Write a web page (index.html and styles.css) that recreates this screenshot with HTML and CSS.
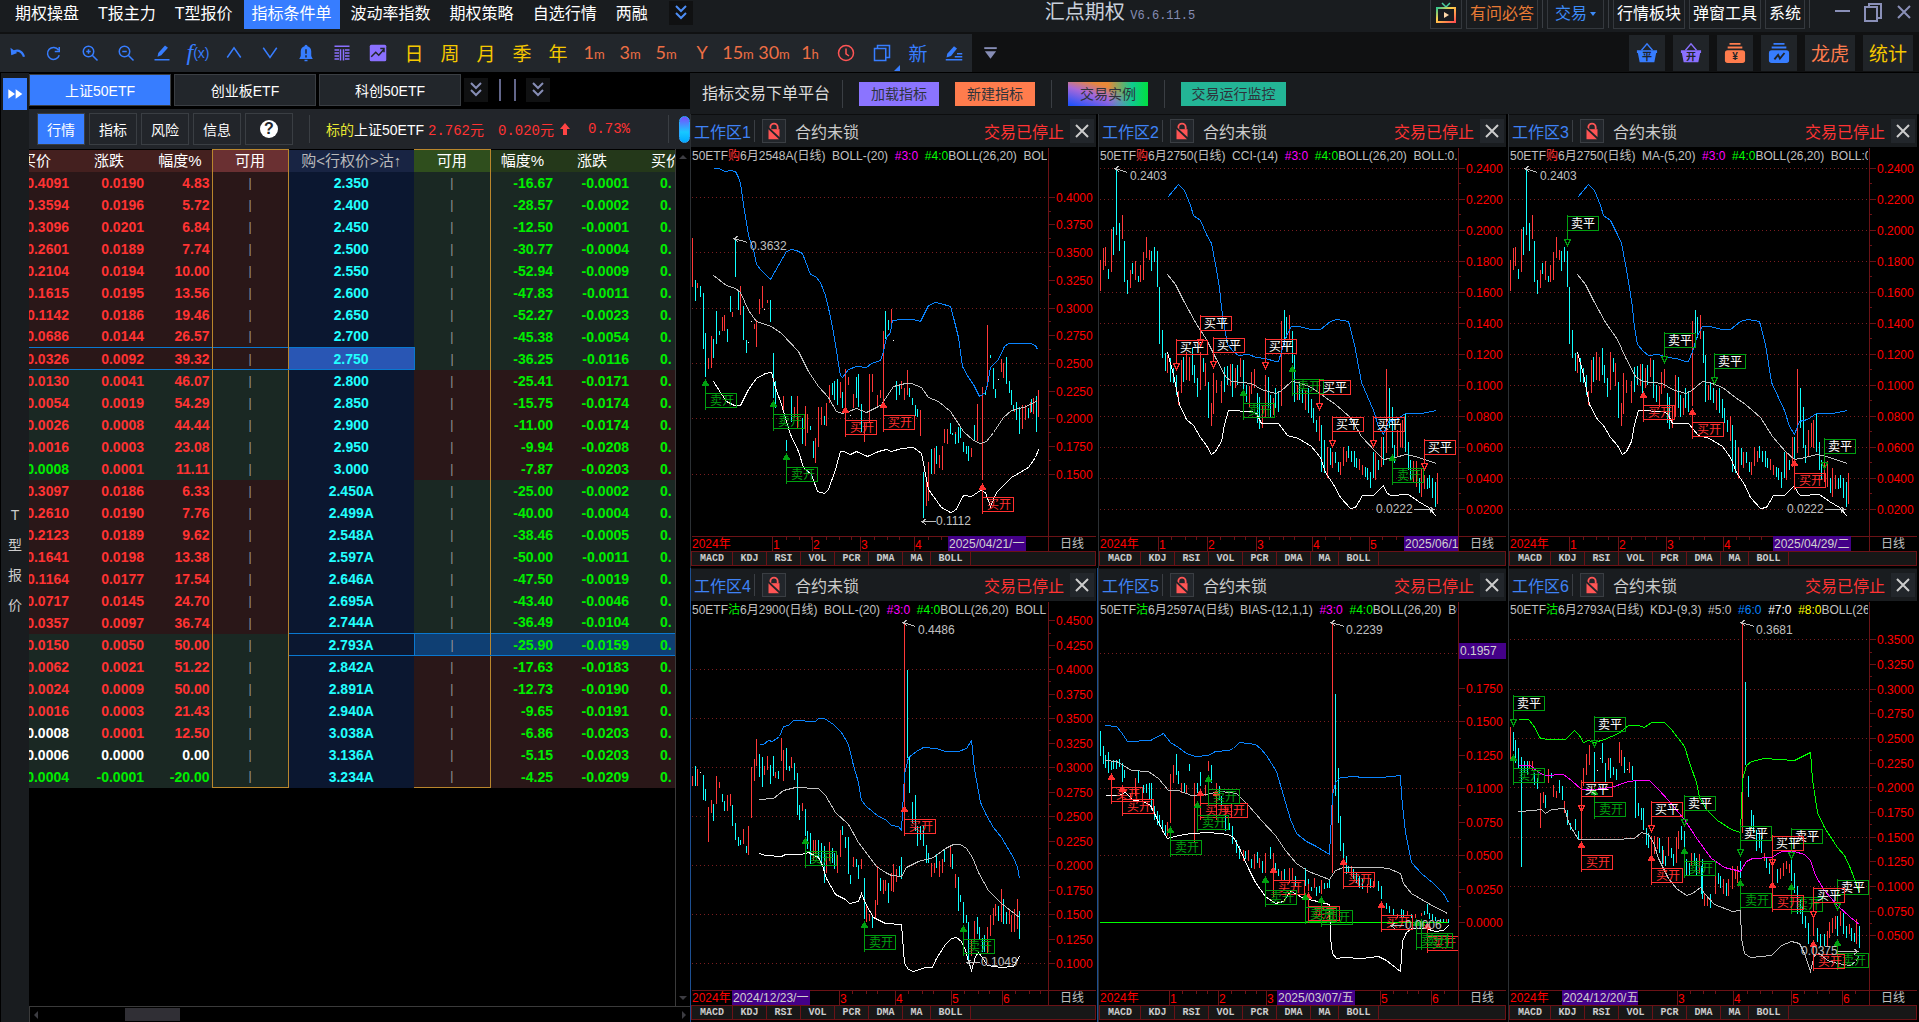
FILE: index.html
```html
<!DOCTYPE html>
<html lang="zh-CN">
<head>
    <meta charset="UTF-8">
    <meta name="viewport" content="width=device-width, initial-scale=1.0">
    <title>汇点期权</title>
    <link rel="stylesheet" href="styles.css">
</head>
<body>

    <!-- Shared icons -->
    <svg class="icon-defs" aria-hidden="true">
        <symbol id="i-chevrons" viewBox="0 0 24 24"><path d="M7 5l5 5 5-5M7 12l5 5 5-5" fill="none" stroke="currentColor" stroke-width="2"/></symbol>
        <symbol id="i-close" viewBox="0 0 24 24"><path d="M6 6l12 12M18 6L6 18" fill="none" stroke="currentColor" stroke-width="2"/></symbol>
        <symbol id="i-lock" viewBox="0 0 24 24"><path d="M8 10V8a4 4 0 0 1 8 0v2" fill="none" stroke="#f55" stroke-width="2"/><path d="M6 10h12v11H6z" fill="#f55"/><path d="M4 7l15 14" stroke="#202428" stroke-width="2"/></symbol>
        <symbol id="i-basket" viewBox="0 0 24 24"><path d="M6 9l6-7 6 7" fill="none" stroke="currentColor" stroke-width="1.5"/><path d="M1 9h22v3h-1l-2 10H4L2 12H1z" fill="currentColor"/></symbol>
        <symbol id="i-stack" viewBox="0 0 24 24"><path d="M6 2h12M4 6h16" stroke="currentColor" stroke-width="2"/><rect x="1" y="9" width="22" height="14" rx="3" fill="currentColor"/></symbol>
    </svg>

    <!-- Title bar -->
    <div class="titlebar">
        <nav class="menu">
            <a href="#">期权操盘</a>
            <a href="#">T报主力</a>
            <a href="#">T型报价</a>
            <a href="#" class="active">指标条件单</a>
            <a href="#">波动率指数</a>
            <a href="#">期权策略</a>
            <a href="#">自选行情</a>
            <a href="#">两融</a>
            <button class="more" aria-label="更多"><svg><use href="#i-chevrons"/></svg></button>
        </nav>
        <div class="app-name">汇点期权 <span>V6.6.11.5</span></div>
        <div class="title-actions">
            <button class="tv" aria-label="视频">
                <svg viewBox="0 0 24 24">
                    <defs><linearGradient id="tv" x1="0" y1="0" x2="1" y2="1"><stop offset="0" stop-color="#36c98f"/><stop offset=".4" stop-color="#ffd04a"/><stop offset="1" stop-color="#ff4f4f"/></linearGradient></defs>
                    <path d="M8 1l4 4 4-4" fill="none" stroke="#4bd0a0" stroke-width="1.5"/>
                    <rect x="3" y="6" width="18" height="14" fill="none" stroke="url(#tv)" stroke-width="2"/>
                    <path d="M10 10l5 3-5 3z" fill="#ffd8a8"/>
                </svg>
            </button>
            <button class="ask">有问必答</button>
            <i class="sep"></i>
            <button class="trade">交易<span class="caret"></span></button>
            <i class="sep"></i>
            <button>行情板块</button>
            <button>弹窗工具</button>
            <button>系统</button>
            <i class="sep"></i>
        </div>
        <div class="window-buttons">
            <button aria-label="最小化"><svg viewBox="0 0 24 24"><path d="M5 11h15" stroke="currentColor" stroke-width="2"/></svg></button>
            <button aria-label="还原"><svg viewBox="0 0 24 24"><path d="M4 7h12v14H4zM8 7V4h12v14h-4" fill="none" stroke="currentColor" stroke-width="2"/></svg></button>
            <button aria-label="关闭"><svg><use href="#i-close"/></svg></button>
        </div>
    </div>

    <!-- Toolbar -->
    <div class="toolbar">
        <div class="tools">
            <button aria-label="撤销"><svg viewBox="0 0 24 24"><path d="M5 11c5-4 12-3 15 6" fill="none" stroke="currentColor" stroke-width="3"/><path d="M2 5l1 10 8-3z" fill="currentColor"/></svg></button>
            <button aria-label="刷新"><svg viewBox="0 0 24 24"><path d="M18 8a8 8 0 1 0 1 7M19 4v6h-6" fill="none" stroke="currentColor" stroke-width="2"/></svg></button>
            <button aria-label="放大"><svg viewBox="0 0 24 24"><circle cx="10" cy="10" r="7" fill="none" stroke="currentColor" stroke-width="2"/><path d="M7 10h6M10 7v6M15 15l7 7" stroke="currentColor" stroke-width="2"/></svg></button>
            <button aria-label="缩小"><svg viewBox="0 0 24 24"><circle cx="10" cy="10" r="7" fill="none" stroke="currentColor" stroke-width="2"/><path d="M7 10h6M15 15l7 7" stroke="currentColor" stroke-width="2"/></svg></button>
            <button aria-label="画线"><svg viewBox="0 0 24 24"><path d="M2 21h20" stroke="currentColor" stroke-width="2"/><path d="M6 17l1-5 9-10 4 3-9 10z" fill="currentColor"/></svg></button>
            <button class="fx" aria-label="公式"><i>f</i>(x)</button>
            <button aria-label="上"><svg viewBox="0 0 24 24"><path d="M3 18l9-13 9 13" fill="none" stroke="currentColor" stroke-width="2"/></svg></button>
            <button aria-label="下"><svg viewBox="0 0 24 24"><path d="M3 5l9 13 9-13" fill="none" stroke="currentColor" stroke-width="2"/></svg></button>
            <button aria-label="预警"><svg viewBox="0 0 24 24"><path d="M12 1a2 2 0 0 1 2 2c3 1 5 3 5 7v6l2 4H3l2-4v-6c0-4 2-6 5-7a2 2 0 0 1 2-2zM10 21h4v2h-4z" fill="currentColor"/><path d="M12 7v6M12 15v3" stroke="#22262b" stroke-width="2"/></svg></button>
            <button class="violet" aria-label="T型"><svg viewBox="0 0 24 24"><path d="M2 3h20M10 7v15M14 7v15M2 8h6M2 12h6M2 16h6M2 20h6M16 8h6M16 12h6M16 16h6M16 20h6" stroke="currentColor" stroke-width="2"/></svg></button>
            <button class="violet" aria-label="走势"><svg viewBox="0 0 24 24"><rect x="1" y="1" width="22" height="22" rx="2" fill="currentColor"/><path d="M3 17l6-6 4 4 7-8M15 6h5v5" fill="none" stroke="#22262b" stroke-width="2"/></svg></button>
            <button class="period">日</button>
            <button class="period">周</button>
            <button class="period">月</button>
            <button class="period">季</button>
            <button class="period">年</button>
            <button class="minute">1<small>m</small></button>
            <button class="minute">3<small>m</small></button>
            <button class="minute">5<small>m</small></button>
            <button class="minute">Y</button>
            <button class="minute">15<small>m</small></button>
            <button class="minute">30<small>m</small></button>
            <button class="minute">1<small>h</small></button>
            <button class="clock" aria-label="定时"><svg viewBox="0 0 24 24"><circle cx="12" cy="12" r="10" fill="none" stroke="currentColor" stroke-width="2"/><path d="M12 6v7l4 3" fill="none" stroke="currentColor" stroke-width="2"/></svg></button>
            <button class="windows" aria-label="窗口"><svg viewBox="0 0 24 24"><path d="M2 6h15v16H2zM6 6V2h16v16h-5" fill="none" stroke="currentColor" stroke-width="2"/></svg></button>
            <button class="new">新</button>
            <button aria-label="编辑"><svg viewBox="0 0 24 24"><path d="M1 21h22M13 17h10M16 13h7" stroke="currentColor" stroke-width="2"/><path d="M2 18l1-5 9-10 4 3-8 10z" fill="currentColor"/></svg></button>
        </div>
        <button class="drop" aria-label="更多工具"><svg viewBox="0 0 24 24"><path d="M2 5h20" stroke="currentColor" stroke-width="3"/><path d="M3 10h18l-9 12z" fill="currentColor"/></svg></button>
        <div class="shortcuts">
            <button class="blue"><svg><use href="#i-basket"/></svg><b>平</b></button>
            <button class="violet"><svg><use href="#i-basket"/></svg><b>开</b></button>
            <button class="orange"><svg><use href="#i-stack"/></svg><b>¥</b></button>
            <button class="blue" aria-label="走势图"><svg viewBox="0 0 24 24"><use href="#i-stack"/><path d="M7 19l4-5 2 4 5-6" fill="none" stroke="#202428" stroke-width="2"/></svg></button>
            <button class="wide orange">龙虎</button>
            <button class="wide yellow">统计</button>
        </div>
    </div>

    <div class="main">
        <!-- Side rail -->
        <div class="rail">
            <button class="expand" aria-label="展开"><svg viewBox="0 0 24 24"><path d="M2 5l10 7-10 7zM13 5l10 7-10 7z" fill="#fff"/></svg></button>
            <a href="#" class="rail-label">T型报价</a>
        </div>

        <!-- Option quotes -->
        <div class="quotes">
            <div class="tabs">
                <button class="active">上证50ETF</button>
                <button>创业板ETF</button>
                <button>科创50ETF</button>
                <button class="more" aria-label="更多标的"><svg><use href="#i-chevrons"/></svg></button>
                <i class="bar"></i>
                <i class="bar"></i>
                <button class="more" aria-label="更多月份"><svg><use href="#i-chevrons"/></svg></button>
            </div>
            <div class="subbar">
                <button class="active">行情</button>
                <button>指标</button>
                <button>风险</button>
                <button>信息</button>
                <button aria-label="帮助"><span class="help">?</span></button>
                <i class="sep"></i>
                <div class="underlying"><em>标的</em>上证50ETF</div>
                <div class="figure">2.762元</div>
                <div class="figure">0.020元</div>
                <svg class="up" viewBox="0 0 18 24"><path d="M9 6l5 6h-3v6H7v-6H4z" fill="#f44"/></svg>
                <div class="figure">0.73%</div>
                <i class="sep last"></i>
                <i class="pill"></i>
            </div>
            <div class="table-area">
                <div class="table-clip">
                    <table class="chain">
                        <colgroup><col class="c1"><col class="c2"><col class="c3"><col class="c4"><col class="c5"><col class="c6"><col class="c7"><col class="c8"><col class="c9"></colgroup>
                        <thead>
                            <tr>
                                <th class="bid">买价</th>
                                <th>涨跌</th>
                                <th class="pct">幅度%</th>
                                <th class="avail">可用</th>
                                <th class="strike">购&lt;行权价&gt;沽↑</th>
                                <th class="put avail">可用</th>
                                <th class="put pct">幅度%</th>
                                <th class="put">涨跌</th>
                                <th class="put ask">买价</th>
                            </tr>
                        </thead>
                        <tbody id="chain-body"></tbody>
                    </table>
                </div>
                <div class="vscroll"><i></i><i></i></div>
            </div>
            <div class="hscroll"><i></i><span></span><i></i></div>
        </div>

        <!-- Indicator trading workspaces -->
        <div class="platform">
            <div class="platform-head">
                <h1>指标交易下单平台</h1>
                <button class="load">加载指标</button>
                <button class="create">新建指标</button>
                <i class="sep"></i>
                <button class="demo">交易实例</button>
                <i class="sep"></i>
                <button class="monitor">交易运行监控</button>
            </div>
            <div class="workspaces" id="workspaces"></div>
        </div>
    </div>

    <script src="script.js"></script>
</body>
</html>
```

FILE: styles.css
```css
* {
    box-sizing: border-box;
}
body {
    margin: 0;
    height: 100vh;
    min-width: 1500px;
    display: flex;
    flex-direction: column;
    overflow: hidden;
    background: #000;
    color: #fff;
    font: 16px "Liberation Sans", "Noto Sans CJK SC", sans-serif;
}
button {
    margin: 0;
    padding: 0;
    border: 0;
    background: none;
    color: inherit;
    font: inherit;
    white-space: nowrap;
    cursor: pointer;
}
a {
    color: inherit;
    text-decoration: none;
}
svg {
    width: 24px;
    height: 24px;
    display: block;
}
.icon-defs {
    position: absolute;
    width: 0;
    height: 0;
}
.sep {
    width: 1px;
    height: 28px;
    background: #3a3e43;
}

/* Title bar */
.titlebar {
    flex: none;
    height: 33px;
    display: flex;
    align-items: flex-start;
    background: #191c1f;
    border-bottom: 1px solid #101112;
}
.menu {
    flex: 3 0 auto;
    display: flex;
    gap: 3px;
    padding-left: 7px;
}
.menu a {
    padding: 0 8px;
    line-height: 28px;
    height: 29px;
    white-space: nowrap;
}
.menu a.active,
.tabs .active,
.subbar .active {
    background: #377dff;
}
.more {
    width: 24px;
    height: 24px;
    background: #101112;
    color: #4d8df5;
}
.menu .more {
    margin: 1px 0 0 10px;
}
.app-name {
    font-size: 20px;
    line-height: 24px;
    color: #c8cfda;
}
.app-name span {
    font: 12px "Liberation Mono", monospace;
    color: #868db5;
}
.title-actions {
    flex: 2 0 auto;
    display: flex;
    justify-content: flex-end;
    gap: 4px;
}
.title-actions button {
    height: 29px;
    padding: 0 3px;
    line-height: 26px;
    background: #191c1f;
    border: 1px solid #34383d;
    border-top: 0;
}
.title-actions .tv {
    width: 32px;
}
.title-actions .ask {
    color: #e87a35;
}
.title-actions .trade {
    color: #3d8bf7;
    padding: 0 7px;
}
.caret {
    display: inline-block;
    margin-left: 3px;
    border: 3px solid transparent;
    border-top: 4px solid #3d8bf7;
}
.window-buttons {
    display: flex;
    gap: 7px;
    padding: 0 3px 0 20px;
    color: #8a90b8;
}

/* Toolbar */
.toolbar {
    flex: none;
    height: 40px;
    display: flex;
    align-items: center;
    background: #101112;
    border-bottom: 1px solid #000;
}
.tools {
    display: flex;
    align-items: center;
    height: 38px;
    background: #22262b;
    color: #377dff;
}
.tools button {
    position: relative;
    width: 36px;
    height: 36px;
    display: flex;
    align-items: center;
    justify-content: center;
}
.tools svg {
    width: 18px;
    height: 18px;
}
.tools .fx {
    font-size: 14px;
}
.fx i {
    font: italic 24px "Liberation Serif", serif;
}
.tools .violet,
.shortcuts .violet {
    color: #8a70ff;
}
.tools .period {
    color: #f5c800;
    font-size: 19px;
}
.tools .minute {
    color: #ee6f45;
    font-size: 18px;
    font-family: Lato, sans-serif;
    align-items: baseline;
    line-height: 34px;
}
.minute small {
    font-size: 13px;
}
.tools .clock {
    color: #f55;
}
.tools .new {
    font-size: 19px;
}
.windows::after {
    content: "";
    position: absolute;
    right: 0;
    bottom: 0;
    border: 3px solid;
    border-color: transparent #377dff #377dff transparent;
}
.drop {
    margin-left: 11px;
    color: #868db5;
}
.drop svg {
    width: 15px;
    height: 15px;
}
.shortcuts {
    margin-left: auto;
    display: flex;
    gap: 8px;
    padding-right: 6px;
}
.shortcuts button {
    position: relative;
    width: 36px;
    height: 36px;
    padding: 7px;
    background: #202428;
}
.shortcuts svg {
    width: 22px;
    height: 22px;
}
.shortcuts b {
    position: absolute;
    left: 0;
    right: 0;
    top: 15px;
    font-size: 10px;
    line-height: 14px;
    color: #202428;
}
.shortcuts .wide {
    width: 50px;
    padding: 0;
    font-size: 19px;
}
.shortcuts .blue {
    color: #377dff;
}
.shortcuts .orange {
    color: #ff7c4d;
}
.shortcuts .yellow {
    color: #f5c800;
}

.main {
    flex: 1;
    min-height: 0;
    display: flex;
}

/* Side rail */
.rail {
    flex: none;
    width: 29px;
    display: flex;
    flex-direction: column;
    align-items: center;
    background: #191c1f;
    border-left: 1px solid #000;
}
.expand {
    width: 24px;
    height: 32px;
    margin-top: 5px;
    padding: 4px;
    background: #377dff;
}
.expand svg {
    width: 16px;
    height: 16px;
}
.rail-label {
    width: 16px;
    margin: auto 0;
    padding-bottom: 12px;
    font-size: 14px;
    line-height: 30px;
    text-align: center;
    color: #ccc;
    word-break: break-all;
}

/* Option quotes */
.quotes {
    flex: none;
    width: 661px;
    display: flex;
    flex-direction: column;
}
.tabs {
    display: flex;
    gap: 3px;
    height: 36px;
    padding-top: 1px;
    font-size: 14px;
}
.tabs button {
    width: 142px;
    height: 32px;
    background: #22262b;
    border: 1px solid #3a3e43;
}
.tabs .more {
    width: 24px;
    height: 24px;
    margin: 4px 0;
    border: 0;
    color: #868db5;
    background: #101112;
}
.bar {
    width: 2px;
    height: 22px;
    margin: 5px 6px 0 8px;
    background: #62668a;
}
.bar + .bar {
    margin: 5px 7px 0 4px;
}
.subbar {
    display: flex;
    align-items: center;
    gap: 4px;
    height: 40px;
    padding-left: 8px;
    background: #22252a;
    font-size: 14px;
}
.subbar button {
    width: 48px;
    height: 32px;
    border: 1px solid #3a3e43;
}
.help {
    display: block;
    width: 18px;
    height: 18px;
    margin: 0 auto;
    border-radius: 50%;
    background: #fff;
    color: #22252a;
    font-weight: bold;
    font-size: 16px;
    line-height: 18px;
}
.subbar .sep {
    margin: 0 12px;
}
.underlying {
    white-space: nowrap;
}
.underlying em {
    font-style: normal;
    color: #e8e832;
}
.figure {
    width: 66px;
    color: #f33;
    font: 14px "Liberation Mono", "Noto Sans CJK SC", monospace;
}
.up {
    width: 18px;
    margin: 0 10px 0 -12px;
}
.subbar .last {
    margin: 0 6px 0 auto;
}
.pill {
    width: 11px;
    height: 27px;
    border-radius: 6px;
    background: linear-gradient(#7a4dff, #18c8ff 60%, #0af);
    border: 1px solid #2aa8ff;
}
.table-area {
    flex: 1;
    min-height: 0;
    display: flex;
}
.table-clip {
    flex: 1;
    overflow: hidden;
}
.chain {
    width: 674px;
    margin-left: -14px;
    table-layout: fixed;
    border-collapse: collapse;
    font-size: 14px;
    font-weight: bold;
    color: #f33;
}
.c1 { width: 58px; }
.c2 { width: 73px; }
.c3 { width: 66px; }
.c4 { width: 76px; }
.c5 { width: 126px; }
.c6 { width: 76px; }
.c7 { width: 66px; }
.c8 { width: 75px; }
.c9 { width: 58px; }
.chain th,
.chain td {
    height: 22px;
    padding: 0 2px;
    line-height: 20px;
    text-align: right;
    overflow: hidden;
    white-space: nowrap;
}
.chain th {
    padding-right: 22px;
    background: #44201f;
    color: #fff;
    font-size: 15px;
    font-weight: normal;
}
.chain td.bid {
    padding-right: 4px;
}
.chain th.pct {
    padding-right: 10px;
}
.chain th.put {
    padding-right: 24px;
    background: #24381a;
}
.chain th.put.pct {
    padding-right: 12px;
}
.chain th.put.ask,
.chain td.ask {
    padding: 0 0 0 20px;
    text-align: left;
}
.chain td.ask {
    padding-left: 29px;
}
.chain .avail {
    padding: 0;
    text-align: center;
    border-left: 1px solid #b9862c;
    border-right: 1px solid #b9862c;
}
.chain th.avail {
    background: #6a3032;
    border-top: 1px solid #b9862c;
}
.chain th.put.avail {
    padding: 0;
    background: #2f4e1d;
    border-left: 0;
}
.chain .put.avail {
    border-left: 0;
}
.chain tr:last-child td.avail {
    border-bottom: 1px solid #b9862c;
}
.chain td.avail {
    font-weight: normal;
    font-size: 12px;
    color: #999;
}
.chain th.strike {
    padding: 0;
    text-align: center;
    background: #182443;
    color: #bbb;
}
.chain td.strike {
    padding: 0;
    text-align: center;
    background: #0b1730;
    color: #2ff;
}
.chain td.put {
    color: #0e0;
}
.chain td.put.avail {
    color: #999;
}
.chain td.put.pct {
    padding-right: 3px;
}
.warm {
    background: #2a1718;
}
.cool {
    background: #1a2823;
}
.chain .up-text { color: #f33; }
.chain .flat-text { color: #fff; }
.chain .down-text { color: #0e0; }
.chain .picked {
    border-top: 1px solid #0a78d0;
    border-bottom: 1px solid #0a78d0;
}
.chain td.strike.picked {
    border: 1px solid #0a78d0;
}
.chain td.strike.fill {
    background: #2956b4;
}
.chain td.put.fill {
    background: #0f3f73;
}
.vscroll {
    flex: none;
    width: 15px;
    display: flex;
    flex-direction: column;
    justify-content: space-between;
    align-items: center;
    padding: 2px 0;
    border-left: 1px solid #3a3a3a;
}
.vscroll i,
.hscroll i {
    border: 4px solid transparent;
}
.vscroll i:first-child {
    border-bottom-color: #3c3c42;
}
.vscroll i:last-child {
    border-top-color: #3c3c42;
}
.hscroll {
    flex: none;
    height: 16px;
    display: flex;
    align-items: center;
    border-top: 1px solid #3a3a3a;
    border-left: 1px solid #3a3a3a;
}
.hscroll i:first-child {
    border-right-color: #3c3c42;
}
.hscroll span {
    width: 55px;
    height: 13px;
    margin-left: 87px;
    background: #302f35;
}
.hscroll i:last-child {
    margin-left: auto;
    border-left-color: #3c3c42;
}

/* Platform */
.platform {
    flex: 1;
    min-width: 0;
    display: flex;
    flex-direction: column;
}
.platform-head {
    flex: none;
    height: 41px;
    display: flex;
    align-items: center;
    gap: 16px;
    padding: 0 12px;
    background: #191c1f;
    font-size: 14px;
}
.platform-head h1 {
    margin: 0;
    padding-right: 12px;
    border-right: 1px solid #3a3e43;
    font-size: 16px;
    line-height: 28px;
    font-weight: normal;
    color: #ddd;
}
.platform-head button {
    width: 80px;
    height: 24px;
    line-height: 22px;
    color: #2e333b;
}
.platform-head .load { background: #8b74ff; }
.platform-head .create { background: #ff7c4d; }
.platform-head .demo { background: linear-gradient(90deg, transparent 50%, #10c890 80%, #00e040), linear-gradient(to top right, #1450ff, #a868d8 40%, #e88838 65%); }
.platform-head .monitor {
    width: 105px;
    background: #23b596;
}
.workspaces {
    flex: 1;
    min-height: 0;
    display: grid;
    grid-template-columns: 408fr 410fr 411fr;
    grid-template-rows: 1fr 1fr;
}
.workspace {
    min-width: 0;
    min-height: 0;
    display: flex;
    flex-direction: column;
    padding: 0 2px 2px 0;
    border-left: 1px solid #2b2f33;
}
.workspace.current {
    border-color: #1d4f91;
    box-shadow: inset -1px 0 #1d4f91;
}
.ws-head {
    flex: none;
    height: 33px;
    display: flex;
    align-items: center;
    padding: 0 2px 0 3px;
    background: #191c1f;
    border-top: 1px solid #0c0d0e;
}
.ws-name {
    color: #3f82f5;
}
.ws-head .sep {
    height: 22px;
    margin: 0 7px 0 3px;
}
.ws-head button {
    width: 24px;
    height: 24px;
    background: #22262b;
    color: #ccc;
}
.ws-head .lock {
    border: 1px solid #3a3e43;
}
.lock svg {
    width: 22px;
    height: 22px;
}
.ws-state {
    margin-left: 9px;
    color: #ccc;
}
.ws-stopped {
    margin-left: auto;
    margin-right: 6px;
    color: #f33;
}
.chart {
    position: relative;
    flex: 1;
    min-height: 0;
    background: #000;
}
.chart svg {
    width: 100%;
    height: 100%;
    font-size: 12px;
}
.chart-title {
    position: absolute;
    left: 1px;
    top: 0;
    right: 49px;
    overflow: hidden;
    white-space: pre;
    font-size: 12px;
    line-height: 18px;
    color: #c0c0c0;
}
.chart-title b {
    font-weight: normal;
}
.indicators {
    flex: none;
    height: 15px;
    display: grid;
    grid-template-columns: 41px 34px 34px 34px 34px 34px 28px 40px 1fr;
    background: #171717;
    border: 1px solid #6b1216;
    font: bold 10px "Liberation Mono", monospace;
    color: #ccc;
}
.indicators button {
    border-right: 1px solid #6b1216;
    line-height: 13px;
}
.t-red { color: #f33; }
.t-green { color: #0e0; }
.t-lime { color: #0f0; }
.t-pink { color: #f0f; }
.t-blue { color: #0a84ff; }
.t-white { color: #fff; }
.t-yellow { color: #ff0; }
```

FILE: script.js
```javascript
// Option chain: bid, change, % | strike | %, change
const chain = [
    ['0.4091', '0.0190', '4.83', '2.350', '-16.67', '-0.0001'],
    ['0.3594', '0.0196', '5.72', '2.400', '-28.57', '-0.0002'],
    ['0.3096', '0.0201', '6.84', '2.450', '-12.50', '-0.0001'],
    ['0.2601', '0.0189', '7.74', '2.500', '-30.77', '-0.0004'],
    ['0.2104', '0.0194', '10.00', '2.550', '-52.94', '-0.0009'],
    ['0.1615', '0.0195', '13.56', '2.600', '-47.83', '-0.0011'],
    ['0.1142', '0.0186', '19.46', '2.650', '-52.27', '-0.0023'],
    ['0.0686', '0.0144', '26.57', '2.700', '-45.38', '-0.0054'],
    ['0.0326', '0.0092', '39.32', '2.750', '-36.25', '-0.0116'],
    ['0.0130', '0.0041', '46.07', '2.800', '-25.41', '-0.0171'],
    ['0.0054', '0.0019', '54.29', '2.850', '-15.75', '-0.0174'],
    ['0.0026', '0.0008', '44.44', '2.900', '-11.00', '-0.0174'],
    ['0.0016', '0.0003', '23.08', '2.950', '-9.94', '-0.0208'],
    ['0.0008', '0.0001', '11.11', '3.000', '-7.87', '-0.0203', 'down'],
    ['0.3097', '0.0186', '6.33', '2.450A', '-25.00', '-0.0002'],
    ['0.2610', '0.0190', '7.76', '2.499A', '-40.00', '-0.0004'],
    ['0.2123', '0.0189', '9.62', '2.548A', '-38.46', '-0.0005'],
    ['0.1641', '0.0198', '13.38', '2.597A', '-50.00', '-0.0011'],
    ['0.1164', '0.0177', '17.54', '2.646A', '-47.50', '-0.0019'],
    ['0.0717', '0.0145', '24.70', '2.695A', '-43.40', '-0.0046'],
    ['0.0357', '0.0097', '36.74', '2.744A', '-36.49', '-0.0104'],
    ['0.0150', '0.0050', '50.00', '2.793A', '-25.90', '-0.0159'],
    ['0.0062', '0.0021', '51.22', '2.842A', '-17.63', '-0.0183'],
    ['0.0024', '0.0009', '50.00', '2.891A', '-12.73', '-0.0190'],
    ['0.0016', '0.0003', '21.43', '2.940A', '-9.65', '-0.0191'],
    ['0.0008', '0.0001', '12.50', '3.038A', '-6.86', '-0.0203', 'flat'],
    ['0.0006', '0.0000', '0.00', '3.136A', '-5.15', '-0.0203', 'flat'],
    ['0.0004', '-0.0001', '-20.00', '3.234A', '-4.25', '-0.0209', 'down']
];

function tone(v) {
    return Number(v) > 0 ? 'up-text' : Number(v) < 0 ? 'down-text' : 'flat-text';
}

document.getElementById('chain-body').innerHTML = chain.map((r, i) => {
    const inMoney = i < 9 || (i > 13 && i < 21);
    const left = inMoney ? 'warm' : 'cool';
    const right = inMoney ? 'cool' : 'warm';
    const callPick = i === 8 ? ' picked' : '';
    const putPick = i === 21 ? ' picked fill' : '';
    const strikePick = i === 8 ? ' picked fill' : i === 21 ? ' picked' : '';
    return `<tr>
        <td class="bid ${left}${callPick} ${(r[6] || 'up')}-text">${r[0]}</td>
        <td class="${left}${callPick} ${tone(r[1])}">${r[1]}</td>
        <td class="${left}${callPick} ${tone(r[2])}">${r[2]}</td>
        <td class="avail ${left}${callPick}">|</td>
        <td class="strike${strikePick}">${r[3]}</td>
        <td class="put avail ${right}${putPick}">|</td>
        <td class="put pct ${right}${putPick}">${r[4]}</td>
        <td class="put ${right}${putPick}">${r[5]}</td>
        <td class="put ask ${right}${putPick}">0.</td>
    </tr>`;
}).join('');

// Chart data. Coordinates use 3 units per pixel; bars are "x high low".
const series2750 = {
    red: '16 447 540,25 411 475,31 408 465,49 353 483,82 312 383,106 475 530,121 450 507,137 462 512,145 423 506,154 378 440,163 417 445,217 730 785,250 838 880,259 745 845,274 722 805,283 737 808,316 720 835,331 753 822,349 875 942,355 785 908,364 805 845,379 808 875,406 757 822,421 768 830,436 738 797,463 823 885,469 780 848,478 772 830,502 880 950,511 790 915,535 858 910,559 630 882,583 610 683,607 820 865,631 835 895,673 912 988,697 1007 1098,712 1020 1068,736 1052 1090,745 1005 1062,754 1018 1050,793 1043 1075,802 1060 1090,841 1025 1105,859 977 1065,874 773 1023,907 955 1035,916 935 1005,922 925 1008,955 1048 1110,964 1047 1125,979 1070 1155,988 1090 1132,1027 1083 1178',
    cyan: '40 472 502,55 348 430,64 172 372,73 335 420,88 390 512,97 505 548,112 455 488,130 495 512,169 420 480,178 408 452,187 420 528,193 528 698,202 655 740,211 723 777,226 740 812,235 770 815,243 790 850,265 735 810,292 708 790,298 760 815,307 800 857,325 740 780,340 810 918,388 765 840,397 762 820,412 757 855,427 760 820,445 745 860,454 820 870,487 845 935,493 855 953,520 795 890,526 850 915,541 830 890,550 838 900,568 597 700,574 617 680,592 660 755,598 730 870,613 815 865,622 830 875,640 830 905,649 862 920,655 890 935,664 925 962,679 940 1080,688 985 1085,706 1010 1060,721 1022 1055,730 1052 1080,760 1002 1040,769 1018 1052,778 1018 1065,784 1040 1070,811 1065 1095,817 1070 1105,826 1080 1128,835 1022 1100,850 1045 1075,865 975 1060,883 828 950,892 885 1010,898 1000 1055,931 905 1020,940 992 1075,946 1045 1105,973 1100 1145,997 1100 1132,1003 1090 1130,1012 1098 1160,1021 1110 1185',
    lines: [
        ['#0a84ff', '217 260,235 238,250 222,268 240,285 285,295 315,315 328,335 372,348 397,360 460,372 530,380 590,388 650,397 700,415 720,430 733,460 731,485 739,512 742,540 750,550 751,560 720,575 675,590 648,610 647,650 656,675 656,705 631,725 627,760 632,778 700,798 815,835 898,850 945,865 970,880 930,905 924,930 908,980 906,1025 899'],
        ['#c0c0c0', '217 492,240 520,265 570,300 635,335 685,360 740,390 795,410 810,440 815,470 817,500 835,540 846,555 842,590 812,610 814,650 828,690 860,720 880,765 918,800 975,840 1022,865 1044,900 1038,930 1030,960 1036,1025 1058'],
        ['#fff', '217 725,235 790,252 880,275 925,295 942,315 978,335 1002,350 1030,362 1022,378 990,388 940,400 898,470 900,485 907,500 936,550 938,578 974,610 982,650 1005,675 1038,692 1085,715 1120,735 1160,765 1193,782 1188,802 1152,835 1153,866 1123,875 1145,885 1152,940 1150,970 1170,1000 1190,1025 1216']
    ],
    dots: ''
};

const workspaces = [
    {
        title: '50ETF<b class="t-red">购</b>6月2548A(日线)  BOLL-(20)  <b class="t-pink">#3:0</b>  <b class="t-lime">#4:0</b>BOLL(26,20)  BOLL:0.2168',
        x0: 19, x1: 1090, y0: 110,
        scale: { from: 0.4, y: 259, to: 0.15, y2: 1090, step: 0.025, grid: 2 },
        ticks: [['1', 263], ['2', 383], ['3', 527], ['4', 689]], mark: ['2025/04/21/一', 790, 1025],
        red: '22 381 527,38 514 531,70 738 773,79 675 770,112 617 660,118 612 659,142 603 617,166 525 612,208 638 654,214 626 705,223 564 608,232 525 590,247 566 576,295 852 905,328 885 920,337 852 950,361 882 1004,367 908 965,391 979 1053,400 885 1007,409 885 940,424 875 942,433 819 875,466 812 860,481 772 900,490 795 820,505 848 888,538 935 992,553 786 930,562 788 842,577 850 888,586 835 858,595 660 960,619 594 654,649 808 832,658 830 865,667 774 850,706 894 974,724 1100 1182,730 1050 1168,748 1010 1088,763 1030 1070,772 1003 1074,778 951 993,787 952 998,811 960 970,859 1008 1035,877 876 987,892 825 1105,907 642 825,949 741 780,955 753 798,988 893 900,1012 880 952,1021 880 926,1036 870 905,1045 860 908,1060 834 915',
        cyan: '31 507 570,46 525 557,55 546 712,61 666 795,85 682 738,94 600 698,103 660 672,127 654 692,136 555 602,151 384 497,160 540 597,175 585 687,184 687 725,256 567 632,265 725 858,271 807 890,304 984 1017,319 852 930,352 920 998,376 942 955,385 988 1038,418 912 940,442 815 850,448 808 865,457 801 880,472 842 888,514 795 860,520 788 885,529 876 962,601 600 682,610 625 655,634 808 865,643 822 850,673 830 855,682 858 880,691 880 912,697 893 917,715 1080 1220,739 1012 1088,754 1003 1058,796 933 968,802 963 970,811 968 998,820 945 993,826 948 980,835 990 1020,844 1003 1028,850 1002 1048,868 940 985,901 842 850,916 729 738,925 770 832,931 832 860,964 735 818,973 807 843,979 835 880,985 880 897,994 870 925,1003 885 967,1029 888 918,1039 862 902,1054 852 962',
        lines: [
            ['#0a84ff', '85 173,100 173,120 181,135 178,150 182,160 200,167 218,175 280,184 335,190 375,205 415,215 460,230 480,257 505,280 465,305 422,320 415,335 418,352 428,376 492,390 497,405 515,420 555,433 605,445 665,457 740,466 792,472 798,490 774,515 766,545 768,560 756,587 748,595 720,605 680,615 665,622 630,650 626,685 626,706 632,730 585,750 574,765 578,795 588,805 620,820 680,833 765,850 798,865 820,883 855,900 845,910 805,916 768,940 745,957 705,970 697,1035 697,1050 703,1058 715'],
            ['#c0c0c0', '85 493,125 523,150 532,165 545,190 600,215 631,260 646,290 668,340 720,370 780,400 825,430 860,455 900,472 908,490 902,515 892,545 903,580 885,590 880,625 825,660 817,680 817,708 828,730 858,760 870,795 900,835 960,865 988,885 996,903 990,925 965,955 920,980 898,1025 887,1058 868'],
            ['#fff', '85 810,105 845,125 872,147 884,165 884,190 835,215 803,240 788,258 785,270 830,290 880,315 970,340 1020,355 1068,378 1090,398 1140,418 1147,430 1135,450 1075,466 1020,475 1020,495 1030,515 1020,547 1037,580 1020,605 1015,620 1022,650 1013,685 1009,710 1026,730 1135,770 1190,795 1204,812 1197,835 1153,860 1155,887 1137,900 1145,916 1187,935 1145,980 1100,1030 1070,1050 1040,1060 1015']
        ],
        dots: '190 694,199 631,238 596,496 912,625 690,940 805',
        signals: { sellOpen: '61 847,265 910,304 1069', buyOpen: '481 928,595 913,892 1159' },
        notes: [['0.3632', 195, 404, 186, 394, 148, 382], ['0.1112', 755, 1229, 750, 1231, 712, 1231]]
    },
    {
        title: '50ETF<b class="t-red">购</b>6月2750(日线)  CCI-(14)  <b class="t-pink">#3:0</b>  <b class="t-lime">#4:0</b>BOLL(26,20)  BOLL:0.0512',
        x0: 13, x1: 1090, y0: 110,
        scale: { from: 0.24, y: 172, to: 0.02, y2: 1195, step: 0.02, grid: 1 },
        ticks: [['1', 190], ['2', 337], ['3', 484], ['4', 652], ['5', 823]], mark: ['2025/06/1', 929, 1090],
        ...series2750,
        signals: { sellOpen: '445 877,592 805,892 1072', buyClose: '244 688,316 616,355 682,511 685,673 808,712 919,835 919,988 988' },
        notes: [['0.2403', 107, 193, 98, 185, 60, 174], ['0.0222', 845, 1193, 956, 1195, 1018, 1195]]
    },
    {
        title: '50ETF<b class="t-red">购</b>6月2750(日线)  MA-(5,20)  <b class="t-pink">#3:0</b>  <b class="t-lime">#4:0</b>BOLL(26,20)  BOLL:0.0512',
        x0: 13, x1: 1090, y0: 110,
        scale: { from: 0.24, y: 172, to: 0.02, y2: 1195, step: 0.02, grid: 1 },
        ticks: [['1', 193], ['2', 339], ['3', 482], ['4', 652]], mark: ['2025/04/29/二', 804, 1037],
        ...series2750,
        signals: { sellClose: '186 316,478 667,625 730,956 985', buyOpen: '413 883,559 934,866 1087' },
        notes: [['0.2403', 107, 193, 98, 185, 60, 174], ['0.0222', 845, 1193, 956, 1195, 1018, 1195]]
    },
    {
        title: '50ETF<b class="t-green">沽</b>6月2900(日线)  BOLL-(20)  <b class="t-pink">#3:0</b>  <b class="t-lime">#4:0</b>BOLL(26,20)  BOLL:0.1483',
        current: true,
        x0: 19, x1: 1090, y0: 105,
        scale: { from: 0.45, y: 163, to: 0.1, y2: 1195, step: 0.025, grid: 2 },
        ticks: [['3', 463], ['4', 631], ['5', 799], ['6', 952]], mark: ['2024/12/23/一', 142, 376],
        red: '22 630 660,37 608 660,70 723 828,79 700 740,94 630 713,103 648 665,127 687 735,136 682 720,175 789 833,190 780 866,199 603 755,208 578 645,214 516 600,238 598 625,247 570 612,271 618 635,289 513 585,295 550 645,319 573 605,352 710 735,385 820 885,391 820 865,424 870 920,433 828 885,457 868 920,466 792 873,505 873 903,529 878 908,544 1015 1068,553 1045 1065,571 1003 1055,577 900 1018,595 943 985,601 942 975,619 920 975,625 895 977,634 910 948,658 172 810,739 890 933,748 890 920,763 885 933,772 878 920,796 840 903,811 925 965,859 1120 1170,868 1065 1128,907 1083 1165,916 1047 1110,925 1025 1078,931 1015 1050,949 970 1068,973 1030 1075,979 1047 1098,988 1030 1098,997 1000 1090',
        cyan: '31 600 660,55 627 702,61 667 705,85 713 765,112 683 707,118 705 735,142 715 780,151 770 820,160 812 840,166 822 835,184 840 860,223 563 632,232 573 662,256 597 652,265 570 628,280 615 638,304 545 612,313 598 613,328 590 640,337 620 745,343 717 760,361 727 808,367 795 850,376 800 895,400 822 880,409 830 892,418 840 950,442 845 890,448 860 910,472 780 805,481 813 845,490 813 925,496 927 953,514 878 903,520 898 938,538 937 1060,562 1047 1085,586 935 975,610 950 1012,643 900 930,649 873 938,667 310 575,673 570 680,682 708 770,691 685 795,697 780 840,706 780 820,715 780 840,724 838 890,730 860 892,754 865 905,778 852 888,802 865 910,820 933 1035,826 988 1008,835 1008 1070,844 1047 1070,850 1067 1185,877 1053 1103,883 1083 1120,892 1115 1160,898 1108 1160,940 1020 1065,955 998 1075,964 1038 1075,1003 1035 1118',
        lines: [
            ['#0a84ff', '222 536,235 535,250 523,262 525,282 510,294 480,310 478,325 463,390 465,400 457,418 457,445 475,468 500,490 535,505 600,520 650,530 705,545 722,580 752,600 762,620 778,640 781,650 793,658 625,670 575,695 556,715 546,755 547,780 558,820 558,845 547,860 523,868 610,885 710,905 750,925 785,950 815,985 875,997 905,1003 940'],
            ['#c0c0c0', '222 701,265 697,295 675,330 664,400 667,420 690,450 740,490 775,520 830,575 903,600 922,620 930,650 932,665 905,700 887,745 877,780 848,805 838,825 838,845 850,862 875,880 920,910 975,950 1013,1003 1055'],
            ['#fff', '222 865,240 870,290 873,300 868,350 868,370 862,400 875,412 900,425 940,450 987,480 1003,492 1015,520 1007,530 985,545 1020,565 1055,600 1073,648 1076,658 1195,670 1213,685 1220,720 1208,742 1207,755 1180,780 1137,800 1118,815 1117,828 1128,840 1155,850 1190,860 1215,870 1175,880 1163,890 1175,908 1200,950 1207,985 1203,995 1190,1003 1173']
        ],
        dots: '46 619',
        signals: { sellOpen: '361 859,538 1111,835 1123', buyOpen: '658 760' },
        notes: [['0.4486', 700, 188, 692, 180, 656, 168], ['0.1049', 888, 1190, 884, 1192, 848, 1192]]
    },
    {
        title: '50ETF<b class="t-green">沽</b>6月2597A(日线)  BIAS-(12,1,1)  <b class="t-pink">#3:0</b>  <b class="t-lime">#4:0</b>BOLL(26,20)  BOLL:0.0072',
        x0: 13, x1: 1090, y0: 105,
        scale: { from: 0.175, y: 367, to: 0, y2: 1072, step: 0.025, grid: 2, above: 262 },
        price: ['0.1957', 232, 280], zero: 1072,
        ticks: [['1', 223], ['2', 370], ['3', 514], ['5', 856], ['6', 1009]], mark: ['2025/03/07/五', 548, 780],
        red: '106 680 700,121 635 690,217 768 810,226 623 770,235 597 650,259 650 680,274 655 680,298 650 830,340 585 615,331 655 690,364 650 680,445 852 885,460 852 885,478 865 908,493 875 905,511 862 922,535 860 905,559 915 945,583 905 950,592 907 945,640 950 975,658 935 965,679 942 985,712 172 920,769 900 930,790 935 960,817 955 980,835 945 965,907 1043 1055,937 1035 1050,961 1045 1055,979 1040 1050,1054 1058 1068',
        cyan: '16 492 570,25 538 593,31 567 605,40 558 620,49 583 610,55 582 608,64 580 607,73 578 603,82 590 648,88 612 635,130 615 650,145 655 680,154 652 680,163 650 700,169 650 730,178 720 760,187 735 775,193 745 780,202 760 795,211 775 810,244 563 625,250 613 652,268 650 680,283 594 615,307 650 680,316 617 660,349 597 650,373 660 700,379 690 720,391 750 795,403 770 790,412 780 833,424 820 860,433 840 878,451 855 880,469 880 905,487 857 890,502 885 920,526 843 878,541 890 920,550 908 930,568 910 945,601 930 960,631 905 960,640 940 955,649 962 975,664 962 990,673 960 980,688 950 968,697 950 965,703 940 965,721 383 690,730 605 770,736 750 855,745 830 890,754 870 925,760 900 920,775 910 940,784 920 950,793 930 965,802 940 968,826 940 965,850 945 975,859 960 1000,874 1010 1030,883 1020 1040,895 1030 1048,919 1030 1052,925 1032 1052,949 1045 1055,988 1035 1048,997 1015 1045,1003 1040 1060,1012 1045 1062,1021 1052 1065,1036 1060 1068,1045 1058 1068,1060 1058 1070',
        lines: [
            ['#0a84ff', '31 478,65 481,80 500,97 527,165 523,205 502,225 528,250 545,275 563,300 573,340 569,360 557,400 554,415 548,433 529,480 534,495 548,515 570,545 618,565 690,585 760,605 803,635 827,665 843,703 867,712 690,720 650,735 634,780 631,800 634,860 634,915 628,918 690,930 800,950 890,980 925,1015 953,1045 985,1060 1010'],
            ['#c0c0c0', '31 583,65 586,85 600,110 615,160 617,190 638,220 673,250 675,290 689,330 685,375 678,425 683,460 720,500 765,540 810,570 855,605 895,640 917,703 942,720 915,745 905,850 905,880 910,915 923,925 955,950 985,1000 1015,1058 1043'],
            ['#fff', '31 688,70 690,90 680,115 705,145 706,165 718,185 755,205 800,218 817,250 808,290 802,340 800,400 805,415 815,435 855,460 910,480 950,511 993,540 1015,565 1008,585 978,600 985,625 1000,655 1005,690 1013,703 1016,707 1120,712 1165,725 1180,745 1178,800 1180,850 1174,875 1186,915 1218,922 1130,935 1102,950 1090,990 1090,1020 1097,1045 1094,1060 1080']
        ],
        dots: '',
        signals: { buyOpen: '49 664,82 700,316 712,364 712,535 946,640 1022,745 922,859 1051,997 1112', sellOpen: '226 823,307 748,340 670,511 976,631 1027,679 1036,964 1105,979 1103' },
        notes: [['0.2239', 753, 188, 747, 180, 709, 168], ['0.0006', 930, 1078, 926, 1081, 890, 1081]]
    },
    {
        title: '50ETF<b class="t-green">沽</b>6月2793A(日线)  KDJ-(9,3)  #5:0  <b class="t-blue">#6:0</b>  <b class="t-white">#7:0</b>  <b class="t-yellow">#8:0</b>BOLL(26,20)',
        x0: 13, x1: 1096, y0: 105,
        scale: { from: 0.35, y: 220, to: 0.05, y2: 1111, step: 0.025, grid: 2 },
        ticks: [['3', 517], ['4', 688], ['5', 860], ['6', 1015]], mark: ['2024/12/20/五', 171, 402],
        red: '16 480 580,73 585 605,82 583 615,106 680 785,115 678 710,130 608 650,145 655 693,154 675 695,178 705 740,229 640 820,235 605 660,244 562 625,253 535 595,310 575 610,343 525 590,349 550 600,373 588 620,439 810 930,448 810 865,457 813 850,475 853 895,490 813 870,514 813 890,520 795 850,562 860 900,586 865 920,601 980 1020,610 990 1020,634 895 985,658 940 985,673 940 990,685 900 970,694 910 940,700 900 950,715 172 800,781 860 885,805 880 945,829 905 940,838 890 930,847 885 910,856 895 920,928 1060 1110,970 1095 1145,976 1068 1115,985 1055 1100,994 1050 1090,1009 1035 1080,1036 1075 1105,1057 1058 1135',
        cyan: '25 495 555,31 520 590,40 545 605,49 573 902,58 583 620,67 585 625,88 620 655,97 635 668,121 685 725,139 620 635,163 640 680,172 658 700,187 730 775,196 770 790,211 758 790,220 795 820,268 558 650,292 530 590,301 590 650,316 575 635,325 603 625,334 608 640,358 573 620,382 600 640,391 643 755,400 710 750,409 725 760,415 725 790,424 785 835,430 800 845,463 815 860,472 840 895,481 870 900,499 845 875,505 865 900,529 778 820,538 795 910,544 880 930,553 890 930,571 860 900,577 875 930,592 900 985,595 880 1000,619 985 1025,643 920 955,649 930 965,667 950 990,709 885 935,724 345 595,733 630 693,742 730 785,748 745 800,757 790 855,766 800 845,772 810 860,787 875 905,796 890 925,820 910 950,862 880 945,871 920 980,880 960 1045,889 1000 1045,895 1020 1075,904 1050 1085,913 1070 1135,940 1085 1130,949 1105 1140,961 1105 1140,1000 1050 1110,1018 1040 1105,1027 1080 1115,1042 1085 1125,1051 1100 1130,1066 1080 1148',
        lines: [
            ['#0f0', '40 460,70 460,85 478,105 517,130 520,180 520,210 493,225 508,235 528,250 523,268 528,300 520,340 503,370 478,400 478,418 485,440 470,480 469,500 490,540 540,555 590,575 650,585 695,605 730,640 765,680 790,709 800,715 640,725 600,740 588,780 578,870 583,900 570,918 560,925 640,940 740,960 785,1000 845,1020 870,1040 910,1065 980'],
            ['#f0f', '40 598,75 600,100 620,120 628,175 625,200 645,230 670,265 672,320 665,370 647,400 643,435 644,460 670,490 705,540 760,580 820,620 878,660 905,709 918,725 887,745 880,800 875,830 858,870 857,900 868,918 885,935 930,960 975,1000 1020,1040 1055,1065 1078'],
            ['#c0c0c0', '40 737,85 735,110 732,122 743,140 730,178 728,195 775,220 822,330 822,390 817,410 800,430 806,445 830,460 880,490 940,515 970,545 990,565 985,588 965,600 985,630 1018,685 1038,709 1036,712 1120,720 1165,738 1178,800 1170,830 1140,862 1130,885 1136,900 1165,919 1218,930 1170,945 1165,970 1185,1000 1195,1040 1200,1055 1190,1065 1170']
        ],
        dots: '277 613,286 577,367 610',
        signals: { sellOpen: '25 607,268 709,538 889,709 985,862 997,1000 1165', buyOpen: '229 871,439 910,805 991,928 1168', sellClose: '25 391,268 454,538 691,709 781,862 790,1000 946', buyClose: '229 649,439 709,805 811,928 970' },
        notes: [['0.3681', 757, 188, 749, 180, 711, 168], ['0.0375', 890, 1157, 1000, 1160, 1063, 1160]]
    }
];

const signalStyles = {
    sellOpen: ['卖开', '#00a010', '#00a010'],
    buyOpen: ['买开', '#ff3030', '#ff3030'],
    sellClose: ['卖平', '#00a010', '#fff'],
    buyClose: ['买平', '#ff3030', '#fff']
};
const AXIS = 48;
const DATES = 15;
const BOTTOM = 1276;

function points(text) {
    return text ? text.split(',').map(p => p.split(' ').map(Number)) : [];
}

function line(x1, y1, x2, y2, color, extra = '') {
    return `<path d="M${x1 + 0.5} ${y1 + 0.5}L${x2 + 0.5} ${y2 + 0.5}" stroke="${color}" ${extra}/>`;
}

function label(x, y, text, color) {
    return `<text x="${x}" y="${y}" fill="${color}">${text}</text>`;
}

function drawChart(svg, w) {
    const width = svg.clientWidth - AXIS;
    const height = svg.clientHeight - DATES;
    const X = v => Math.round((v - w.x0) * width / (w.x1 - w.x0));
    const Y = v => Math.round((v - w.y0) * height / (BOTTOM - w.y0));
    const axisColor = '#6b1216';
    let out = '';

    // Grid and price axis
    const s = w.scale;
    const steps = Math.round((s.from - s.to) / s.step);
    const gap = (s.y2 - s.y) / steps;
    const dash = 'stroke-dasharray="1 3"';
    for (let i = 0; i <= steps; i++) {
        const v = s.y + gap * i;
        const fromBottom = steps - i;
        if (fromBottom % s.grid === 0 && !(w.current && i === 0) && !(w.zero && i === steps)) {
            out += line(0, Y(v), width, Y(v), '#7a1d20', dash);
        }
        out += line(width, Y(v), width + 6, Y(v), axisColor);
        if (i < steps) out += line(width, Y(v + gap / 2), width + 2, Y(v + gap / 2), axisColor);
        out += label(width + 8, Y(v) + 5, Math.abs(s.from - s.step * i).toFixed(4), '#f00');
    }
    if (s.above) out += line(0, Y(s.above), width, Y(s.above), '#7a1d20', dash);
    if (w.zero) out += line(0, Y(w.zero), X(1060), Y(w.zero), '#0f0');

    // Price bars
    points(w.red).forEach(p => out += line(X(p[0]), Y(p[1]), X(p[0]), Y(p[2]), '#ff3838'));
    points(w.cyan).forEach(p => out += line(X(p[0]), Y(p[1]), X(p[0]), Y(p[2]), '#1ff'));
    points(w.dots).forEach(p => out += `<rect x="${X(p[0])}" y="${Y(p[1])}" width="1" height="1" fill="#fff"/>`);

    // Bands
    w.lines.forEach(([color, text]) => {
        const pts = points(text).map(p => `${X(p[0]) + 0.5},${Y(p[1]) + 0.5}`).join(' ');
        out += `<polyline points="${pts}" fill="none" stroke="${color}"/>`;
    });

    // Trade signals
    Object.keys(w.signals).forEach(kind => {
        const [text, color, ink] = signalStyles[kind];
        points(w.signals[kind]).forEach(p => {
            const x = X(p[0]);
            const y = Y(p[1]);
            out += `<rect x="${x + 0.5}" y="${y + 0.5}" width="31" height="14" fill="none" stroke="${color}"/>`;
            if (kind.endsWith('Open')) {
                out += line(x, y - 8, x, y + 16, color);
                out += `<path d="M${x + 0.5} ${y - 14}l4 7h-8z" fill="${color}"/>`;
                out += label(x + 5, y + 12, text, ink);
            } else {
                out += line(x, y - 2, x, y + 23, color);
                out += `<path d="M${x - 2.5} ${y + 23.5}h6l-3 6z" fill="none" stroke="${color}"/>`;
                out += label(x + 4, y + 12, text, ink);
            }
        });
    });

    // High and low notes
    w.notes.forEach(([text, tx, ty, ax, ay, bx, by]) => {
        out += label(X(tx), Y(ty) + 5, text, '#c0c0c0');
        const dir = bx < ax ? 1 : -1;
        out += line(X(ax), Y(ay), X(bx), Y(by), '#c0c0c0');
        out += `<path d="M${X(bx) + 4 * dir} ${Y(by) - 2}l${-4 * dir} 2.5l${4 * dir} 3" fill="none" stroke="#c0c0c0"/>`;
    });

    // Date axis
    out += line(width, 0, width, height + DATES, axisColor);
    out += line(0, height, width + AXIS, height, axisColor);
    out += label(1, height + 12, '2024年', '#f00');
    w.ticks.forEach(([text, v]) => {
        out += line(X(v), height, X(v), height + DATES, axisColor);
        [40, 80, 115].forEach(d => {
            if (v + d < 1070) out += line(X(v + d), height, X(v + d), height + 3, axisColor);
        });
        out += label(X(v) + 1, height + 13, text, '#f00');
    });
    const m = w.mark;
    out += `<rect x="${X(m[1])}" y="${height}" width="${X(m[2]) - X(m[1])}" height="15" fill="#440088"/>`;
    out += label(X(m[1]) + 1, height + 12, m[0], '#d0d0d0');
    out += label(width + 12, height + 12, '日线', '#c0c0c0');
    if (w.price) {
        out += `<rect x="${width + 1}" y="${Y(w.price[1])}" width="${AXIS}" height="16" fill="#440088"/>`;
        out += label(width + 2, Y(w.price[1]) + 12, w.price[0], '#d0d0d0');
    }
    svg.innerHTML = out;
}

const indicators = ['MACD', 'KDJ', 'RSI', 'VOL', 'PCR', 'DMA', 'MA', 'BOLL'];
document.getElementById('workspaces').innerHTML = workspaces.map((w, i) => `
    <section class="workspace${w.current ? ' current' : ''}">
        <div class="ws-head">
            <span class="ws-name">工作区${i + 1}</span>
            <i class="sep"></i>
            <button class="lock" aria-label="锁定合约"><svg><use href="#i-lock"/></svg></button>
            <span class="ws-state">合约未锁</span>
            <span class="ws-stopped">交易已停止</span>
            <button aria-label="关闭"><svg><use href="#i-close"/></svg></button>
        </div>
        <div class="chart">
            <svg shape-rendering="crispEdges"></svg>
            <div class="chart-title">${w.title}</div>
        </div>
        <div class="indicators">${indicators.map(n => `<button>${n}</button>`).join('')}</div>
    </section>`).join('');

function drawAll() {
    document.querySelectorAll('.chart svg').forEach((svg, i) => drawChart(svg, workspaces[i]));
}
drawAll();
window.addEventListener('resize', drawAll);
```
